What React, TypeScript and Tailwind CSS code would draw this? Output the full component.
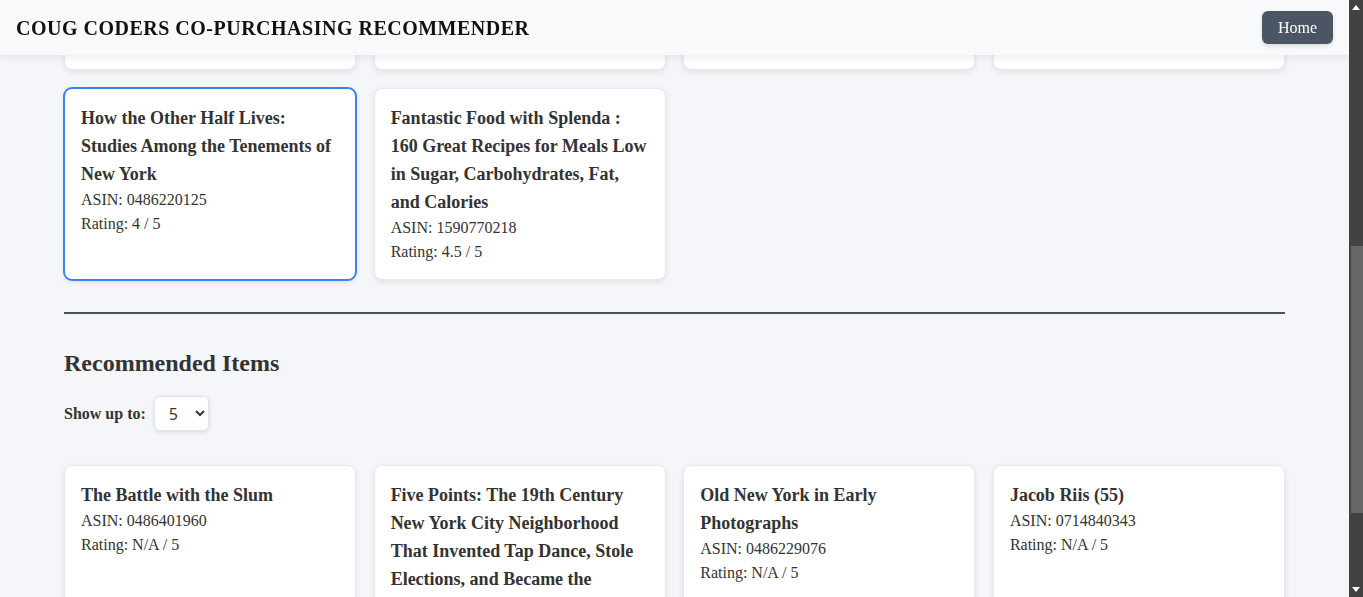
import { useLayoutEffect, useRef } from "react";
import clsx from "clsx";

type Product = { title: string; asin: string; rating: string };

// The first four sit above the fold; the page opens scrolled past them.
const purchased: Product[] = [
  { title: "The Gangs of New York: An Informal History of the Underworld", asin: "1560252758", rating: "4.5" },
  { title: "Low Life: Lures and Snares of Old New York", asin: "0374528985", rating: "4" },
  { title: "Tenement Landlord", asin: "0813506980", rating: "N/A" },
  { title: "Children of the Tenements", asin: "0486407942", rating: "N/A" },
  { title: "How the Other Half Lives: Studies Among the Tenements of New York", asin: "0486220125", rating: "4" },
  {
    title: "Fantastic Food with Splenda : 160 Great Recipes for Meals Low in Sugar, Carbohydrates, Fat, and Calories",
    asin: "1590770218",
    rating: "4.5",
  },
];

const recommended: Product[] = [
  { title: "The Battle with the Slum", asin: "0486401960", rating: "N/A" },
  {
    title:
      "Five Points: The 19th Century New York City Neighborhood That Invented Tap Dance, Stole Elections, and Became the World's Most Notorious Slum",
    asin: "0684859955",
    rating: "N/A",
  },
  { title: "Old New York in Early Photographs", asin: "0486229076", rating: "N/A" },
  { title: "Jacob Riis (55)", asin: "0714840343", rating: "N/A" },
];

const SELECTED = "0486220125";

function ProductCard({
  product,
  selected,
  cardRef,
}: {
  product: Product;
  selected?: boolean;
  cardRef?: React.Ref<HTMLLIElement>;
}) {
  return (
    <li
      ref={cardRef}
      className={clsx(
        "rounded-lg border border-[#e6e8ee] bg-white px-4 py-[15px] text-[#333] shadow-[0_2px_6px_rgba(0,0,0,0.09)]",
        selected && "outline-2 -outline-offset-1 outline-[#3b82f6]",
      )}
    >
      <h3 className="text-[18px] font-bold leading-[28px]">{product.title}</h3>
      <p className="text-base leading-6">ASIN: {product.asin}</p>
      <p className="text-base leading-6">Rating: {product.rating} / 5</p>
    </li>
  );
}

function FakeScrollbar() {
  return (
    <div aria-hidden="true" className="flex w-[14px] shrink-0 flex-col bg-[#424242]">
      <div className="flex h-[15px] items-center justify-center">
        <svg width="8" height="5" viewBox="0 0 8 5">
          <path d="M4 0 L8 5 L0 5 Z" fill="#fff" />
        </svg>
      </div>
      <div className="h-[231px]" />
      <div className="ml-[2px] h-[267px] bg-[#686868]" />
      <div className="flex-1" />
      <div className="flex h-[15px] items-center justify-center">
        <svg width="8" height="5" viewBox="0 0 8 5">
          <path d="M0 0 L8 0 L4 5 Z" fill="#fff" />
        </svg>
      </div>
    </div>
  );
}

export default function App() {
  const scrollRef = useRef<HTMLDivElement>(null);
  const anchorRef = useRef<HTMLLIElement>(null);

  // Open the page scrolled so the selected card's row sits just under the header.
  useLayoutEffect(() => {
    if (scrollRef.current && anchorRef.current) {
      scrollRef.current.scrollTop = anchorRef.current.offsetTop - 88;
    }
  }, []);

  return (
    <div className="flex h-screen overflow-hidden bg-[#f4f6f9] font-['Liberation_Serif','Times_New_Roman',serif] text-[#333]">
      <div ref={scrollRef} className="relative flex-1 overflow-hidden">
        <header className="sticky top-0 z-10 flex h-[55px] items-center justify-between bg-[#f8f9fb] px-4 shadow-[0_2px_8px_rgba(0,0,0,0.08)]">
          <h1 className="text-[20px] font-bold tracking-[0.5px] text-[#111]">
            COUG CODERS CO-PURCHASING RECOMMENDER
          </h1>
          <button
            type="button"
            className="h-[33px] rounded-md bg-[#4b5563] px-4 text-base text-white shadow-[0_2px_4px_rgba(0,0,0,0.12)]"
          >
            Home
          </button>
        </header>

        <main className="px-16 pb-16 pt-8">
          <h2 className="text-[24px] font-bold leading-[32px]">Purchased Items</h2>
          <ul className="mt-6 grid grid-cols-4 gap-x-[17.5px] gap-y-[18px]">
            {purchased.map((p, i) => (
              <ProductCard
                key={p.asin}
                product={p}
                selected={p.asin === SELECTED}
                cardRef={i === 4 ? anchorRef : undefined}
              />
            ))}
          </ul>

          <hr className="mt-8 border-t-2 border-[#4b5063]" />

          <h2 className="mt-[33px] text-[24px] font-bold leading-[32px]">Recommended Items</h2>
          <div className="mt-[17px] flex items-center gap-2">
            <label htmlFor="limit" className="text-base font-bold">
              Show up to:
            </label>
            <select
              id="limit"
              defaultValue="5"
              className="h-[35px] w-[55px] rounded-md border border-[#e2e4ea] bg-white pl-[10px] font-['Open_Sans',sans-serif] text-[16px] text-[#333] shadow-[0_1px_4px_rgba(0,0,0,0.12)]"
            >
              {[5, 10, 15, 20].map((n) => (
                <option key={n} value={n}>
                  {n}
                </option>
              ))}
            </select>
          </div>

          <ul className="mt-[34px] grid grid-cols-4 gap-x-[17.5px] gap-y-[18px]">
            {recommended.map((p) => (
              <ProductCard key={p.asin} product={p} />
            ))}
          </ul>
        </main>
      </div>
      <FakeScrollbar />
    </div>
  );
}
